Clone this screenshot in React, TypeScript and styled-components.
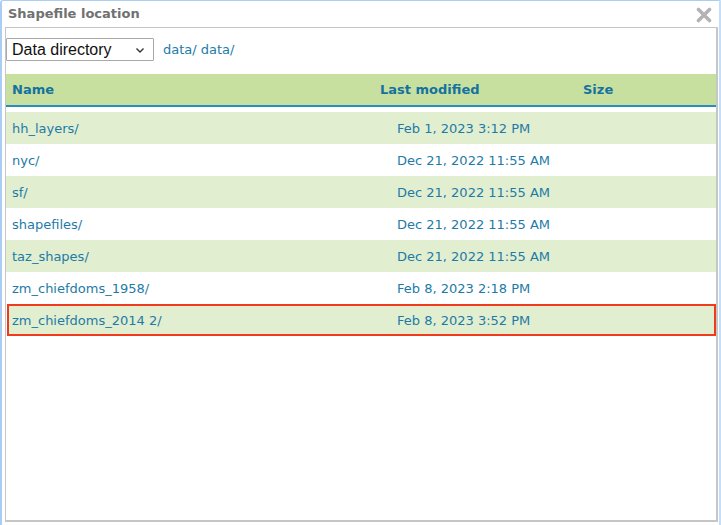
import React from "react";
import styled, { createGlobalStyle } from "styled-components";

const Global = createGlobalStyle`
  html, body { margin: 0; padding: 0; background: #ffffff; }
  * { box-sizing: border-box; }
`;

const Window = styled.div`
  width: 721px;
  height: 525px;
  background: #ffffff;
  border-top: 1px solid #a9cdf3;
  border-left: 2px solid #a9cdf3;
  border-right: 2px solid #c4def7;
  border-top-left-radius: 3px;
  display: flex;
  flex-direction: column;
  font-family: "DejaVu Sans", Verdana, sans-serif;
`;

const TitleBar = styled.div`
  height: 26px;
  display: flex;
  align-items: center;
  justify-content: space-between;
  padding: 0 6px 0 6px;
`;

const Title = styled.div`
  font-size: 13px;
  font-weight: bold;
  color: #717171;
  margin-top: -2px;
`;

const CloseButton = styled.button`
  width: 18px;
  height: 18px;
  border: none;
  background: none;
  padding: 0;
  display: flex;
  align-items: center;
  justify-content: center;
  margin-top: 2px;
`;

const Panel = styled.div`
  margin: 0 1px 3px 3px;
  flex: 1;
  border: 1px solid #c6c6c6;
  border-right-width: 2px;
  border-bottom-width: 2px;
  display: flex;
  flex-direction: column;
`;

const Toolbar = styled.div`
  display: flex;
  align-items: center;
  gap: 9px;
  padding-top: 10px;
  height: 46px;
  align-items: flex-start;
`;

const SelectWrap = styled.div`
  position: relative;
  width: 148px;
  height: 23px;
  border: 1px solid #a8a8a8;
  border-radius: 1px;
  background: #fff;
  display: flex;
  align-items: center;
  padding-left: 5px;
  font-family: "Liberation Sans", Arial, sans-serif;
  font-size: 16px;
  color: #111;
`;

const Chevron = styled.svg`
  position: absolute;
  right: 8px;
  top: 8px;
`;

const Crumb = styled.a`
  font-size: 13px;
  color: #1d7ba7;
  text-decoration: none;
  line-height: 23px;
`;

const Row = styled.div<{ $variant: "head" | "odd" | "even"; $selected?: boolean }>`
  display: grid;
  grid-template-columns: 368px 203px 1fr;
  align-items: center;
  height: ${(p) => (p.$variant === "head" ? "33px" : "32px")};
  background: ${(p) =>
    p.$variant === "head" ? "#c8e09f" : p.$variant === "odd" ? "#e1eed0" : "#ffffff"};
  border-bottom: ${(p) => (p.$variant === "head" ? "2px solid #2a8cbf" : "none")};
  margin-bottom: ${(p) => (p.$variant === "head" ? "5px" : "0")};
  box-shadow: ${(p) => (p.$selected ? "inset 0 0 0 2px #f03a1c" : "none")};
  margin-left: ${(p) => (p.$selected ? "1px" : "0")};
  color: ${(p) => (p.$variant === "head" ? "#14729f" : "#1d7ba7")};
  font-size: 13px;
  font-weight: ${(p) => (p.$variant === "head" ? "bold" : "normal")};
`;

const Cell = styled.div<{ $indent?: number }>`
  padding-left: ${(p) => p.$indent ?? 6}px;
  white-space: nowrap;
`;

const rows = [
  { name: "hh_layers/", date: "Feb 1, 2023 3:12 PM" },
  { name: "nyc/", date: "Dec 21, 2022 11:55 AM" },
  { name: "sf/", date: "Dec 21, 2022 11:55 AM" },
  { name: "shapefiles/", date: "Dec 21, 2022 11:55 AM" },
  { name: "taz_shapes/", date: "Dec 21, 2022 11:55 AM" },
  { name: "zm_chiefdoms_1958/", date: "Feb 8, 2023 2:18 PM" },
  { name: "zm_chiefdoms_2014 2/", date: "Feb 8, 2023 3:52 PM", selected: true },
];

export default function App() {
  return (
    <>
      <Global />
      <Window>
        <TitleBar>
          <Title>Shapefile location</Title>
          <CloseButton aria-label="Close">
            <svg width="16" height="16" viewBox="0 0 16 16">
              <path d="M2.5 2.5 L13.5 13.5 M13.5 2.5 L2.5 13.5" stroke="#b3b3b3" strokeWidth="3.6" strokeLinecap="round" />
            </svg>
          </CloseButton>
        </TitleBar>
        <Panel>
          <Toolbar>
            <SelectWrap>
              Data directory
              <Chevron width="10" height="7" viewBox="0 0 10 7">
                <path d="M1.5 1.5 L5 5 L8.5 1.5" stroke="#333" strokeWidth="1.4" fill="none" />
              </Chevron>
            </SelectWrap>
            <Crumb>data/ data/</Crumb>
          </Toolbar>
          <Row $variant="head">
            <Cell>Name</Cell>
            <Cell>Last modified</Cell>
            <Cell>Size</Cell>
          </Row>
          {rows.map((r, i) => (
            <Row key={r.name} $variant={i % 2 === 0 ? "odd" : "even"} $selected={r.selected}>
              <Cell $indent={r.selected ? 5 : 6}>{r.name}</Cell>
              <Cell $indent={r.selected ? 22 : 23}>{r.date}</Cell>
              <Cell />
            </Row>
          ))}
        </Panel>
      </Window>
    </>
  );
}
